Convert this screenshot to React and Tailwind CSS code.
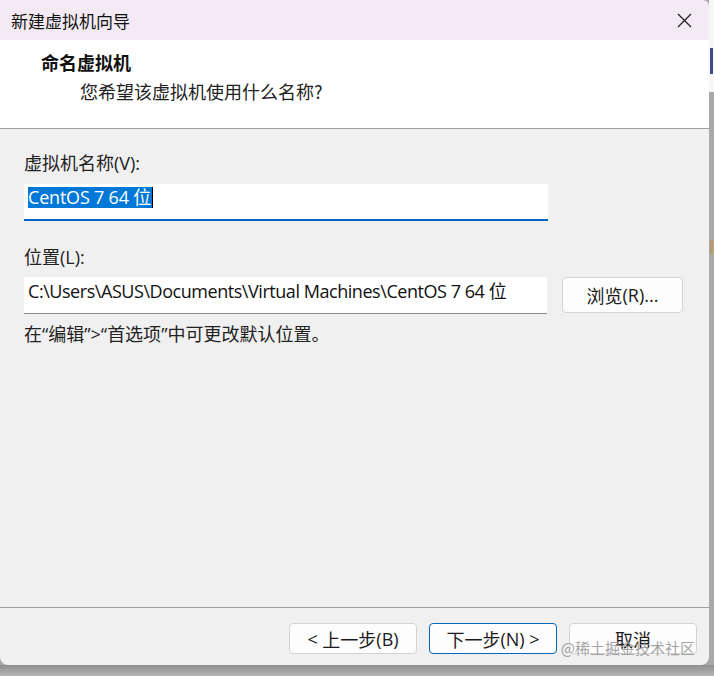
import React from "react";

const sans = { fontFamily: '"Segoe UI", "Open Sans", "Noto Sans CJK SC", sans-serif' };

export default function App() {
  return (
    <div className="w-[714px] h-[676px] bg-[#a6a6a6] flex flex-col overflow-hidden">
      <div className="flex h-[665px]">
        <div
          className="w-[709px] h-[665px] flex flex-col rounded-br-[8px] rounded-bl-[8px] rounded-tr-[6px] overflow-hidden relative text-[#1a1a1a]"
          style={{ fontFamily: '"Noto Sans CJK SC", "Noto Sans", sans-serif' }}
        >
          {/* Title bar */}
          <div className="h-[40px] bg-[#f4eaf4] flex items-center justify-between pl-[11px] pr-[16px] shrink-0">
            <span className="text-[17px] leading-none text-[#111]">新建虚拟机向导</span>
            <svg width="15" height="15" viewBox="0 0 15 15" className="mr-[1px]">
              <path d="M1 1 L14 14 M14 1 L1 14" stroke="#222" strokeWidth="1.3" fill="none" />
            </svg>
          </div>

          {/* Header */}
          <div className="h-[89px] bg-white border-b border-[#a0a0a0] shrink-0 flex flex-col">
            <div className="pl-[41px] pt-[11px] text-[18px] leading-[22px] font-bold text-[#111]">命名虚拟机</div>
            <div className="pl-[80px] pt-[7px] text-[18px] leading-[22px] text-[#222]">您希望该虚拟机使用什么名称?</div>
          </div>

          {/* Body */}
          <div className="flex-1 bg-[#f0f0f0] px-[24px] pt-[22px] flex flex-col">
            <div className="text-[18px] leading-[22px] text-[#222]">
              虚拟机名称<span style={sans}>(V):</span>
            </div>
            <div className="mt-[10px] w-[524px] h-[37px] bg-white border-b-2 border-[#0067c0] pl-[4px] pt-[3px] flex">
              <span className="bg-[#0078d7] text-white text-[18px] leading-[21px] h-[21px] pr-[1px] tracking-[-0.2px]" style={sans}>
                CentOS 7 64 位
              </span>
              <span className="w-[1px] h-[21px] bg-black" />
            </div>

            <div className="mt-[24px] text-[18px] leading-[22px] text-[#222]">
              位置<span style={sans}>(L):</span>
            </div>
            <div className="mt-[9px] flex items-start gap-[15px]">
              <div
                className="w-[523px] h-[37px] bg-white border-b border-[#8a8a8a] pl-[4px] pt-[3px] text-[18px] leading-[22px] text-[#111] whitespace-nowrap overflow-hidden tracking-[-0.45px]"
                style={sans}
              >
                C:\Users\ASUS\Documents\Virtual Machines\CentOS 7 64 位
              </div>
              <button className="w-[121px] h-[36px] bg-[#fdfdfd] border border-[#d3d3d3] rounded-[4px] text-[18px] leading-none text-[#1a1a1a] flex items-center justify-center">
                浏览<span style={sans}>(R)...</span>
              </button>
            </div>

            <div className="mt-[8px] text-[18px] leading-[22px] text-[#222]">
              在<span style={sans}>“</span>编辑<span style={sans}>”&gt;“</span>首选项<span style={sans}>”</span>中可更改默认位置。
            </div>
          </div>

          {/* Footer */}
          <div className="h-[58px] bg-[#f0f0f0] border-t border-[#a0a0a0] shrink-0 flex justify-end items-start pt-[15px] pr-[12px] gap-[12px] relative">
            <button className="w-[128px] h-[31px] bg-[#fdfdfd] border border-[#d3d3d3] rounded-[4px] text-[18px] leading-none flex items-center justify-center text-[#1a1a1a]">
              <span style={sans}>&lt;&nbsp;</span>上一步<span style={sans}>(B)</span>
            </button>
            <button className="w-[128px] h-[31px] bg-[#fdfdfd] border border-[#0067c0] rounded-[4px] text-[18px] leading-none flex items-center justify-center text-[#1a1a1a]">
              下一步<span style={sans}>(N)&nbsp;&gt;</span>
            </button>
            <button className="w-[128px] h-[31px] bg-[#fdfdfd] border border-[#d3d3d3] rounded-[4px] text-[18px] leading-none flex items-center justify-center text-[#1a1a1a]">
              取消
            </button>
            <div className="absolute right-[14px] top-[30px] text-[15px] leading-[20px] text-[#9a9a9a] whitespace-nowrap opacity-90">
              @稀土掘金技术社区
            </div>
          </div>
        </div>
        <div className="flex-1 flex flex-col">
          <div className="h-[92px] bg-[#f7f7f7] relative">
            <div className="absolute left-[1px] top-[48px] w-[3px] h-[26px] bg-[#3a4f8a]" />
          </div>
          <div className="flex-1 bg-[#a9a9a9] relative">
            <div className="absolute left-[1px] top-[148px] w-[3px] h-[14px] bg-[#b89a6a]" />
          </div>
        </div>
      </div>
      <div className="flex-1 bg-gradient-to-b from-[#8f8f8f] to-[#b5b5b5]" />
    </div>
  );
}
